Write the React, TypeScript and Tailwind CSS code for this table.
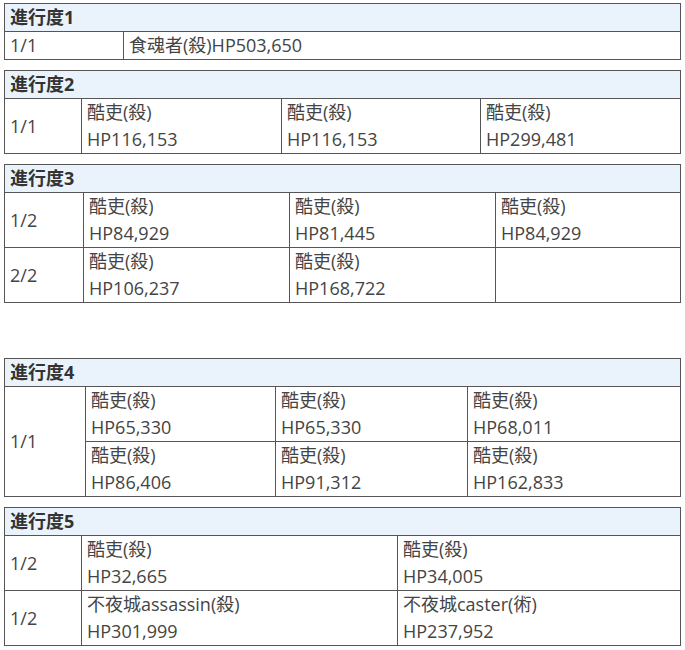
import React from "react";

const font = {
  fontFamily: '"Open Sans", "Noto Sans CJK SC", sans-serif',
};

function Header({ title, span }: { title: string; span: number }) {
  return (
    <tr>
      <th
        colSpan={span}
        className="border border-[#555] bg-[#eaf3fc] px-[5px] py-0 text-left font-bold leading-[27px] text-[#333]"
      >
        {title}
      </th>
    </tr>
  );
}

function Td({ children, rowSpan }: { children?: React.ReactNode; rowSpan?: number }) {
  return (
    <td
      rowSpan={rowSpan}
      className="border border-[#555] px-[5px] py-0 align-middle leading-[27px] text-[#444]"
    >
      {children}
    </td>
  );
}

function Enemy({ name, hp }: { name: string; hp: string }) {
  return (
    <>
      {name}
      <br />
      {hp}
    </>
  );
}

export default function App() {
  return (
    <div className="bg-white pl-[4px] pt-[3px] text-[18px]" style={font}>
      <table className="w-[676px] table-fixed border-collapse">
        <colgroup>
          <col className="w-[119px]" />
          <col className="w-[557px]" />
        </colgroup>
        <tbody>
          <Header title="進行度1" span={2} />
          <tr>
            <Td>1/1</Td>
            <Td>食魂者(殺)HP503,650</Td>
          </tr>
        </tbody>
      </table>

      <table className="mt-[10px] w-[676px] table-fixed border-collapse">
        <colgroup>
          <col className="w-[77px]" />
          <col className="w-[200px]" />
          <col className="w-[199px]" />
          <col className="w-[200px]" />
        </colgroup>
        <tbody>
          <Header title="進行度2" span={4} />
          <tr>
            <Td>1/1</Td>
            <Td><Enemy name="酷吏(殺)" hp="HP116,153" /></Td>
            <Td><Enemy name="酷吏(殺)" hp="HP116,153" /></Td>
            <Td><Enemy name="酷吏(殺)" hp="HP299,481" /></Td>
          </tr>
        </tbody>
      </table>

      <table className="mt-[10px] w-[676px] table-fixed border-collapse">
        <colgroup>
          <col className="w-[79px]" />
          <col className="w-[206px]" />
          <col className="w-[206px]" />
          <col className="w-[185px]" />
        </colgroup>
        <tbody>
          <Header title="進行度3" span={4} />
          <tr>
            <Td>1/2</Td>
            <Td><Enemy name="酷吏(殺)" hp="HP84,929" /></Td>
            <Td><Enemy name="酷吏(殺)" hp="HP81,445" /></Td>
            <Td><Enemy name="酷吏(殺)" hp="HP84,929" /></Td>
          </tr>
          <tr>
            <Td>2/2</Td>
            <Td><Enemy name="酷吏(殺)" hp="HP106,237" /></Td>
            <Td><Enemy name="酷吏(殺)" hp="HP168,722" /></Td>
            <Td />
          </tr>
        </tbody>
      </table>

      <table className="mt-[55px] w-[676px] table-fixed border-collapse">
        <colgroup>
          <col className="w-[81px]" />
          <col className="w-[190px]" />
          <col className="w-[192px]" />
          <col className="w-[213px]" />
        </colgroup>
        <tbody>
          <Header title="進行度4" span={4} />
          <tr>
            <Td rowSpan={2}>1/1</Td>
            <Td><Enemy name="酷吏(殺)" hp="HP65,330" /></Td>
            <Td><Enemy name="酷吏(殺)" hp="HP65,330" /></Td>
            <Td><Enemy name="酷吏(殺)" hp="HP68,011" /></Td>
          </tr>
          <tr>
            <Td><Enemy name="酷吏(殺)" hp="HP86,406" /></Td>
            <Td><Enemy name="酷吏(殺)" hp="HP91,312" /></Td>
            <Td><Enemy name="酷吏(殺)" hp="HP162,833" /></Td>
          </tr>
        </tbody>
      </table>

      <table className="mt-[10px] w-[676px] table-fixed border-collapse">
        <colgroup>
          <col className="w-[77px]" />
          <col className="w-[316px]" />
          <col className="w-[283px]" />
        </colgroup>
        <tbody>
          <Header title="進行度5" span={3} />
          <tr>
            <Td>1/2</Td>
            <Td><Enemy name="酷吏(殺)" hp="HP32,665" /></Td>
            <Td><Enemy name="酷吏(殺)" hp="HP34,005" /></Td>
          </tr>
          <tr>
            <Td>1/2</Td>
            <Td><Enemy name="不夜城assassin(殺)" hp="HP301,999" /></Td>
            <Td><Enemy name="不夜城caster(術)" hp="HP237,952" /></Td>
          </tr>
        </tbody>
      </table>
    </div>
  );
}
